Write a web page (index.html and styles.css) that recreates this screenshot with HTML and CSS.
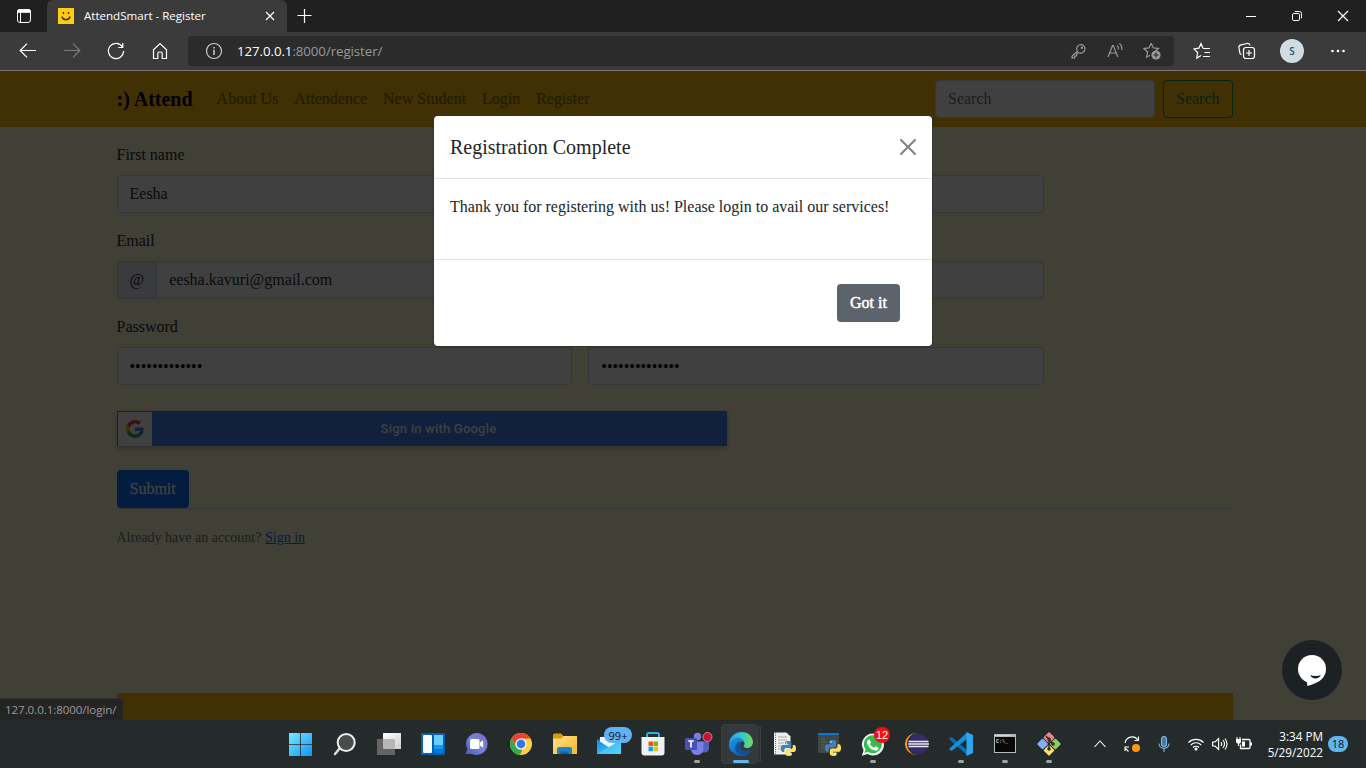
FILE: index.html
```html
<!DOCTYPE html>
<html lang="en">
<head>
<meta charset="utf-8">
<title>AttendSmart - Register</title>
<link rel="stylesheet" href="styles.css">
</head>
<body>
<div class="desktop">
  <header class="titlebar">
    <div class="tab-menu"><svg width="16" height="16" viewBox="0 0 16 16" fill="none" stroke="#fff"><rect x="1.500" y="1.500" width="13" height="13" rx="2.500"/><path d="M1.500 3.800V3.500a2 2 0 0 1 2-2h9a2 2 0 0 1 2 2v.8h-13z" fill="#fff"/><path d="M4.500 5v9.500"/></svg></div>
    <div class="tab">
      <svg class="favicon" width="16" height="16" viewBox="0 0 16 16"><path fill="#fc1" d="M0 0h16v16H0z"/><g stroke="#3a2d00" fill="none" stroke-width="1.3"><path d="M5.500 4v2M10.500 4v2M3.800 8.500c1.200 4.200 7.200 4.200 8.400 0"/></g></svg>
      <span class="tab-title">AttendSmart - Register</span>
      <svg class="tab-close" width="10" height="10" viewBox="0 0 10 10" stroke="#fff" stroke-width="1.2"><path d="m1 1 8 8M9 1 1 9"/></svg>
    </div>
    <svg class="new-tab" width="16" height="16" viewBox="0 0 16 16" stroke="#fff" stroke-width="1.2"><path d="M7.500 1v14M.5 7.500h14"/></svg>
    <div class="window-buttons">
      <span><svg width="12" height="12" viewBox="0 0 12 12" stroke="#fff"><path d="M1 6.500h10"/></svg></span>
      <span><svg width="12" height="12" viewBox="0 0 12 12" stroke="#fff" fill="none"><rect x="1.500" y="3.500" width="7" height="7" rx="1.300"/><path d="M3.800 1.500h4.700a2 2 0 0 1 2 2v4.700"/></svg></span>
      <span><svg width="12" height="12" viewBox="0 0 12 12" stroke="#fff" stroke-width="1.200"><path d="m1 1 10 10M11 1 1 11"/></svg></span>
    </div>
  </header>

  <div class="toolbar">
    <div class="nav-buttons">
      <span><svg width="18" height="16" viewBox="0 0 18 16"><path d="M17 7.500H1.500M8 .7 1.200 7.500 8 14.300"/></svg></span>
      <span class="disabled"><svg width="18" height="16" viewBox="0 0 18 16"><path d="M1 7.500h15.500M10 .7l6.800 6.800-6.800 6.800"/></svg></span>
      <span><svg width="18" height="18" viewBox="0 0 18 18"><path d="M15.500 5A7.600 7.600 0 1 0 16.600 9M15.800 1v4.500h-4.600"/></svg></span>
      <span><svg width="16" height="18" viewBox="0 0 16 18"><path d="M1.500 7.700 8 1.500l6.500 6.200v8.800h-4.300v-5q0-1.500-1.500-1.500H7.300q-1.500 0-1.500 1.500v5H1.500z"/></svg></span>
    </div>
    <div class="address">
      <svg class="info" width="18" height="18" viewBox="0 0 18 18"><circle cx="9" cy="9" r="7.500"/><path d="M9 7.800V13M9 5v1.400" stroke-width="1.500"/></svg>
      <span class="url"><b>127.0.0.1</b>:8000/register/</span>
      <div class="address-icons">
        <svg width="18" height="18" viewBox="0 0 18 18"><path d="M8.300 9.200 3 14.200v1.600h2.700V14h1.900v-1.900l1.900-1.700a4.200 4.200 0 1 0-1.200-1.200z"/><circle cx="12.900" cy="5.800" r=".6"/></svg>
        <svg width="18" height="18" viewBox="0 0 18 18"><path d="M2 15 6.500 3.500h.8L11.800 15M3.500 11h6.800M11 3.500q1.700 1 1.500 4M13.300 1.500q3 2 2.500 6.500"/></svg>
        <svg width="18" height="18" viewBox="0 0 18 18"><path d="m8.200 1.200 2.100 4.700 5.200.6-3.900 3.500M7 13.300l-3.400 1.900 1-5.200L.9 6.500l5.100-.6 2.200-4.700"/><circle cx="13" cy="13" r="4.600" fill="#999" stroke="none"/><path d="M13 10.500v5M10.500 13h5" stroke="#2b2b2b"/></svg>
      </div>
    </div>
    <div class="profile-icons">
      <span><svg width="18" height="18" viewBox="0 0 18 18"><path d="M10 6.300 8 1.500 5.900 6.200 1 6.900l3.600 3.600L3.800 16l4.300-2.500M10 6.500h7M11.500 10.500H17M10 14.500h7"/></svg></span>
      <span><svg width="18" height="18" viewBox="0 0 18 18"><path d="M3.500 12.500a2 2 0 0 1-1.500-1L.9 5.500a2.500 2.500 0 0 1 2-2.700L9 1.500a2.500 2.500 0 0 1 3 2"/><rect x="5.500" y="5.500" width="11" height="11" rx="2.500"/><path d="M11 8v6M8 11h6"/></svg></span>
      <span class="avatar-slot"><i class="avatar">S</i></span>
      <span><svg width="16" height="4" viewBox="0 0 16 4"><g fill="#fff" stroke="none"><circle cx="2.500" cy="2" r="1.300"/><circle cx="8" cy="2" r="1.300"/><circle cx="13.500" cy="2" r="1.300"/></g></svg></span>
    </div>
  </div>

  <main class="page">
    <nav class="site-nav">
      <b class="brand">:) Attend</b>
      <a>About Us</a><a>Attendence</a><a>New Student</a><a>Login</a><a>Register</a>
      <div class="search-box">Search</div>
      <div class="search-button">Search</div>
    </nav>
    <div class="content">
      <div class="fields">
        <label>First name</label>
        <div class="row"><div class="input">Eesha</div><div class="input"></div></div>
        <label>Email</label>
        <div class="group"><div class="addon">@</div><div class="input">eesha.kavuri@gmail.com</div></div>
        <label>Password</label>
        <div class="row"><div class="input secret">•••••••••••••</div><div class="input secret">••••••••••••••</div></div>
      </div>
      <div class="google">
        <div class="google-logo"><svg width="18" height="18" viewBox="0 0 48 48"><path fill="#3b110d" d="M24 9.500c3.540 0 6.710 1.220 9.210 3.600l6.850-6.850C35.900 2.380 30.470 0 24 0 14.620 0 6.510 5.380 2.560 13.220l7.980 6.190C12.430 13.720 17.740 9.500 24 9.500z"/><path fill="#11213d" d="M46.980 24.550c0-1.570-.15-3.090-.38-4.550H24v9.020h12.940c-.58 2.960-2.260 5.480-4.780 7.180l7.730 6c4.510-4.180 7.090-10.360 7.090-17.650z"/><path fill="#3f2f01" d="M10.530 28.590a14.500 14.500 0 0 1 0-9.180l-7.980-6.190a24 24 0 0 0 0 21.560z"/><path fill="#0d2a15" d="M24 48c6.480 0 11.930-2.130 15.890-5.810l-7.730-6c-2.150 1.450-4.920 2.300-8.160 2.300-6.260 0-11.570-4.220-13.470-9.910l-7.980 6.190C6.510 42.620 14.620 48 24 48z"/></svg></div>
        <span>Sign in with Google</span>
      </div>
      <div class="submit">Submit</div>
      <div class="account">Already have an account? <a>Sign in</a></div>
      <div class="footer-bar"></div>
    </div>

    <section class="modal">
      <div class="modal-header"><span>Registration Complete</span><svg width="16" height="16" viewBox="0 0 16 16" stroke="#808080" stroke-width="2" stroke-linecap="round"><path d="m1 1 14 14M15 1 1 15"/></svg></div>
      <div class="modal-body">Thank you for registering with us! Please login to avail our services!</div>
      <div class="modal-footer"><div class="got-it">Got it</div></div>
    </section>
    <div class="chat"><svg width="30" height="32" viewBox="0 0 30 32"><circle cx="15" cy="15" r="14" fill="#fff"/><path fill="#fff" d="M8 26q2.500 2 2.300 6 9-2 14.700-7.500z"/><path fill="#1d2124" d="M13.300 21.300q5 1.200 10.500 0c-1 3.800-9 4.400-10.500 0z"/></svg></div>
    <div class="status">127.0.0.1:8000/login/</div>
  </main>

  <footer class="taskbar">
    <svg width="0" height="0" class="defs"><defs>
      <linearGradient id="win" x2="1" y2="1"><stop stop-color="#75eaff"/><stop offset="1" stop-color="#1193f5"/></linearGradient>
      <linearGradient id="white" x2="1" y2="1"><stop stop-color="#fff"/><stop offset="1" stop-color="#cfcfcf"/></linearGradient>
      <linearGradient id="chatg" x1="1" x2="0" y2="1"><stop stop-color="#8d60c9"/><stop offset=".5" stop-color="#7187dc"/><stop offset="1" stop-color="#4c55bd"/></linearGradient>
      <linearGradient id="folder" x2="1" y2="1"><stop stop-color="#ffe08a"/><stop offset="1" stop-color="#f9b928"/></linearGradient>
      <linearGradient id="mail" x2="1" y2="1"><stop stop-color="#1688df"/><stop offset="1" stop-color="#51d3fa"/></linearGradient>
      <linearGradient id="edgeg" x1="0" x2="1"><stop stop-color="#2b9bea"/><stop offset=".5" stop-color="#31c4d8"/><stop offset="1" stop-color="#68df54"/></linearGradient>
      <linearGradient id="edgeb" x2="1" y2="1"><stop stop-color="#1d9eea"/><stop offset="1" stop-color="#0b4796"/></linearGradient>
      <symbol id="python" viewBox="0 0 16 16"><path fill="#3f83bd" d="M7.500 0C4.200 0 4.400 1.500 4.400 1.500v2H8v.7H2.200S0 4 0 8c0 3.800 2 3.700 2 3.700h1.500V9.500s0-2 2-2h3.700s1.900 0 1.900-1.900V1.900S11.300 0 7.500 0z"/><path fill="#ffe05c" d="M8.500 16c3.300 0 3.100-1.500 3.100-1.500v-2H8v-.7h5.800S16 12 16 8c0-3.800-2-3.700-2-3.700h-1.500v2.200s0 2-2 2H6.800s-1.900 0-1.900 1.900v3.700S4.700 16 8.500 16z"/><circle cx="6" cy="2" r=".8" fill="#fff"/><circle cx="10" cy="14" r=".8" fill="#fff"/></symbol>
    </defs></svg>
    <div class="apps">
      <div class="app"><svg viewBox="0 0 24 24"><path fill="url(#win)" d="M0 1h11.200v11H0zM12 1h11v11H12zM0 12.800h11.200V24H0zM12 12.800h11V24H12z"/></svg></div>
      <div class="app"><svg viewBox="0 0 24 24"><path d="m7 16-5 6" stroke="#ddd" stroke-width="2.500" stroke-linecap="round"/><circle cx="13.200" cy="10.500" r="8.500" fill="#4a4c4d" stroke="#eee" stroke-width="2"/></svg></div>
      <div class="app"><svg viewBox="0 0 24 24"><path fill="url(#white)" d="M6 1h18v16H6z"/><path fill="#656565" d="M0 7h18v16H0z"/><path fill="#b7b7b7" d="M6 7h12v10H6z"/></svg></div>
      <div class="app"><svg viewBox="0 0 24 24"><rect y="1" width="24" height="22" rx="1" fill="#0760ac"/><rect x="2" y="3" width="9" height="18" rx="1" fill="#f5faff"/><path fill="#68ceff" d="M13 3h9v10h-9z"/><path fill="#159aef" d="M13 13h9v8h-9z"/><path d="M13 17h9v4h-9z" fill="#007bdc"/></svg></div>
      <div class="app"><svg viewBox="0 0 24 24"><path fill="url(#chatg)" d="M12 1a11 11 0 1 1-5 21H.6l1.700-5A11 11 0 0 1 12 1z"/><rect x="5" y="7" width="9.500" height="10" rx="1.500" fill="#fff"/><path fill="#fff" d="m15 10.500 3.200-2.300v7.600L15 13.500z"/></svg></div>
      <div class="app"><svg viewBox="0 0 24 24"><circle cx="12" cy="12" r="11" fill="#fdd13c"/><path fill="#ea4335" d="M2.500 6.500A11 11 0 0 1 21.500 6.500H12A5.500 5.500 0 0 0 7.200 14.700z"/><path fill="#34a853" d="M2.500 6.500 7.200 14.700A5.500 5.500 0 0 0 13.500 17.300L11 23A11 11 0 0 1 2.500 6.500z"/><circle cx="12" cy="12" r="5.600" fill="#fff"/><circle cx="12" cy="12" r="4.400" fill="#3478e5"/></svg></div>
      <div class="app"><svg viewBox="0 0 24 24"><path fill="#d99b09" d="M0 3q0-1.500 1.500-1.500H8l3 3v5H0z"/><path fill="url(#folder)" d="M0 6.500h8l2.500-2.500H24v18H0z"/><path fill="#1b83cc" d="M4 22v-5q0-2 2-2h11q2 0 2 2v5z"/><path fill="#1263a5" d="M7.500 19.500h8V22h-8z"/></svg></div>
      <div class="app"><svg viewBox="0 0 24 24"><path fill="#0b69b9" d="M0 8 12 1l12 7v5H0z"/><path fill="#eef5fb" d="M3 5h18v6l-9 5-9-5z"/><path fill="url(#mail)" d="m0 7.500 12 8 12-8V22H0z"/><path fill="#55d1fa" fill-opacity=".6" d="m0 22 24-14.500V22z"/></svg><i class="mail-badge">99+</i></div>
      <div class="app"><svg viewBox="0 0 24 24"><path d="M6 7V3q0-2 2-2h8q2 0 2 2v4" fill="none" stroke="#22b8e6" stroke-width="2"/><path fill="#f1f1f1" d="M.5 5h23v15.500q0 3-3 3h-17q-3 0-3-3z"/><path fill="#f25022" d="M7.500 9.500H12V14H7.500z"/><path fill="#7fba00" d="M12.500 9.500H17V14h-4.500z"/><path fill="#00a4ef" d="M7.500 14.700H12v4.500H7.500z"/><path fill="#ffb900" d="M12.500 14.700H17v4.500h-4.500z"/></svg></div>
      <div class="app running"><svg viewBox="0 0 24 24"><circle cx="12.500" cy="4.500" r="3.700" fill="#777fe2"/><path fill="#555dc0" d="M16 9.500h8v7q0 4-5 4h-3z"/><path fill="#7980e4" d="M6 9.500h12.500v7q0 6.500-6.500 6.500-5 0-6-5z"/><rect y="6" width="12" height="12" rx="1" fill="#4650b7"/><path d="M3.200 9h5.600M6 9v6.500" stroke="#fff" stroke-width="1.700"/><circle cx="22.500" cy="5" r="4.500" fill="#c90f32" stroke="#e2b5bd" stroke-width=".7"/></svg></div>
      <div class="app running active"><svg viewBox="0 0 24 24"><path fill="url(#edgeb)" d="M0 13C1 3 17 3 19 12c-2-4-8-3-8 2 0 6 6 7 12 4-3 6-11 8-17 4Q0 19 0 13z"/><path fill="#124f9d" d="M8 11c-6 8 5 17 13 9l2-2c-7 2-12 1-12-4 0-3 3-5 3-5z"/><path fill="url(#edgeg)" d="M0 12C1-3 22-4 24 9.500c0 7-7 7.500-9 5.500-1-1 1-2 .5-4C13 3 3 5 0 12z"/></svg></div>
      <div class="app"><svg viewBox="0 0 24 24"><path fill="#eee" d="M1 .5h12.500l4 4v18H1z"/><path d="M2.500 1v21" stroke="#777" stroke-dasharray="1 1"/><path d="M5 5h9M5 8h9M5 11h6M5 14h5M5 17h4" stroke="#aaa"/><use href="#python" x="8" y="9" width="15" height="15"/></svg></div>
      <div class="app"><svg viewBox="0 0 24 24"><path fill="#414647" d="M1 1h21v20H1z"/><path fill="#0877cf" d="M1 1h21v2H1z"/><path d="M4 7h4M4 10h6M4 13h3M4 16h5" stroke="#43704b"/><use href="#python" x="8" y="8" width="16" height="16"/></svg></div>
      <div class="app running"><svg viewBox="0 0 24 24"><path fill="#f6f6f6" d="M12 1.500a11 11 0 1 1-5.500 20.500L.8 23.800l1.800-5.600A11 11 0 0 1 12 1.500z"/><path fill="#32be50" d="M12 3.200a9 9 0 1 1-5 16.600l-3.600 1.200 1.200-3.500A9 9 0 0 1 12 3.200z"/><path fill="#fff" d="M8.500 7.200 10 10.500l-1 1.500q1.300 2.700 4 3.800l1.500-1.600 3 1.500q0 3-3.500 2.800-7-1.500-8-8-.1-2.500 2.500-3.300z"/></svg><i class="wa-badge">12</i></div>
      <div class="app"><svg viewBox="0 0 24 24"><ellipse cx="11" cy="12" rx="11" ry="10.700" fill="#f49b27"/><circle cx="13" cy="12" r="11" fill="#252b2b"/><circle cx="13.300" cy="12" r="10.200" fill="#352b6a"/><path d="M3.500 9.500h20M3.200 12H24M3.500 14.500h20" stroke="#eee" stroke-width="1.500"/></svg></div>
      <div class="app running"><svg viewBox="0 0 24 24"><path fill="#0872b9" d="m0 7 2.500-2L18 18v5z"/><path fill="#168fdc" d="M0 17 18 .5V7L2.500 19z"/><path fill="#2ea5f4" d="m17.500 0 6.500 3v18l-6.500 3z"/></svg></div>
      <div class="app running"><svg viewBox="0 0 24 24"><path fill="#b5b8ba" d="M1 2h22v19H1z"/><path fill="#080808" d="M2 5h20v15H2z"/><path d="M2 3.500h15" stroke="#cfd9df"/><text class="prompt" x="3" y="10.500">C:\_</text></svg></div>
      <div class="app running"><svg viewBox="0 0 24 24"><g transform="rotate(45 12 12)"><rect x="3.500" y="3.500" width="8" height="8" rx="1" fill="#82aefb"/><rect x="3.500" y="3.500" width="8" height="8" rx="1" fill="#f78080"/><rect x="12.500" y="3.500" width="8" height="8" rx="1" fill="#8cce66"/><rect x="3.500" y="12.500" width="8" height="8" rx="1" fill="#82aefb"/><rect x="12.500" y="12.500" width="8" height="8" rx="1" fill="#ffe06b"/></g><path d="M9 4l7 8M12 7v10" stroke="#342d2b" stroke-width="1.500"/><g fill="#342d2b"><circle cx="12" cy="7" r="1.800"/><circle cx="16" cy="12" r="1.800"/><circle cx="12" cy="17" r="1.800"/></g></svg></div>
    </div>
    <div class="tray">
      <svg class="wide" width="16" height="16" viewBox="0 0 16 16"><path d="m2.500 11 5.500-6 5.500 6"/></svg>
      <svg class="wide" width="16" height="16" viewBox="0 0 16 16"><path d="M1 7a7.200 7.200 0 0 1 13-3M14.500.5v4h-4M1 15v-4h4M1.500 12.500l3 3"/><circle cx="12" cy="12" r="4" fill="#ff980f" stroke="none"/></svg>
      <svg class="wide mic" width="16" height="16" viewBox="0 0 16 16"><rect x="5.500" y=".5" width="5" height="10" rx="2.500" fill="#4c7799"/><path d="M3 7.500c0 6.500 10 6.500 10 0M8 12.500V16"/></svg>
      <svg width="16" height="16" viewBox="0 0 16 16"><path d="M.5 6.500a10.500 10.500 0 0 1 15 0M2.800 9a7.200 7.200 0 0 1 10.400 0M5 11.500a4.200 4.200 0 0 1 6 0"/><circle cx="8" cy="13" r="1" fill="#fff"/></svg>
      <svg width="16" height="16" viewBox="0 0 16 16"><path d="M.6 6h2.500l3.500-3.500v11L3.100 10H.6zM9 6q1.300 2 0 4M11 4q3 4 0 8M13 2.500q4 5.500 0 11"/></svg>
      <svg width="16" height="16" viewBox="0 0 16 16"><path d="M6 3.500h7q1 0 1 1v7q0 1-1 1H4.500v-4M15.300 6.500v3" stroke-width="1.300"/><path fill="#fff" stroke="none" d="M6 5.500h3v5H6zM0 3h5v3.500q-2 2.500-5 0z"/><path d="M1 1v3M4 1v3M2.500 7v3"/></svg>
      <div class="clock">3:34 PM<br>5/29/2022</div>
      <div class="count">18</div>
    </div>
  </footer>
</div>
</body>
</html>
```
FILE: styles.css
```css
* { box-sizing: border-box; }
body { margin: 0; overflow: hidden; }
svg { display: block; flex: none; }
i { font-style: normal; }
.desktop { display: flex; flex-direction: column; width: 1366px; height: 768px; font-family: "Open Sans", "Noto Sans", sans-serif; }

.titlebar { display: flex; align-items: center; height: 32px; background: #202020; }
.tab-menu { display: flex; justify-content: center; width: 47px; }
.tab { display: flex; align-items: center; width: 240px; height: 32px; padding: 0 12px 0 11px; border-radius: 6px 6px 0 0; background: #3b3b3b; color: #fff; font-size: 11.6px; }
.tab-title { flex: 1; margin-left: 10px; padding-bottom: 1px; letter-spacing: -0.02px; white-space: nowrap; }
.new-tab { margin-left: 10px; }
.window-buttons { display: flex; margin-left: auto; }
.window-buttons span { display: flex; justify-content: center; width: 46px; }

.toolbar { display: flex; align-items: center; height: 39px; padding: 0 5px 1px 6px; border-bottom: 1px solid #77777a; background: #3b3b3b; }
.toolbar svg { fill: none; stroke: #fff; stroke-width: 1.2; }
.nav-buttons, .profile-icons { display: flex; flex: none; align-items: center; }
.nav-buttons span { display: flex; justify-content: center; width: 44px; }
.nav-buttons .disabled svg { stroke: #7b7b7b; }
.address { display: flex; flex: none; align-items: center; width: 986px; height: 30px; margin-left: 6px; padding: 0 13px 0 17px; border-radius: 4px; background: #2b2b2b; color: #999; font-size: 13.3px; }
.address .info { stroke: #ccc; }
.url { margin-left: 14px; letter-spacing: -.08px; white-space: nowrap; }
.url b { color: #fff; font-weight: 400; }
.address-icons { display: flex; gap: 19px; margin-left: auto; }
.address-icons svg { stroke: #999; }
.profile-icons { margin-left: 5.5px; }
.profile-icons span { display: flex; justify-content: center; width: 45px; }
.profile-icons span:last-child { width: 46.5px; }
.avatar { display: flex; align-items: center; justify-content: center; width: 24px; height: 24px; border-radius: 50%; background: #d0dce2; color: #25505d; font-size: 10px; font-weight: 600; }

.page { position: relative; height: 649px; background: #404037; color: #090a0b; font: 16px/24px "Liberation Serif", "Times New Roman", serif; }
.site-nav { display: flex; align-items: center; height: 56px; padding: 0 133px 0 116.5px; background: #403003; }
.brand { margin-right: 24px; color: #000; font-size: 20px; }
.site-nav a { margin-right: 15.9px; color: #1f1900; }
.search-box { width: 220px; height: 38px; margin-left: auto; padding: 6px 12px; border: 1px solid #343637; border-radius: 4px; background: #404040; color: #1b1d1f; }
.search-button { width: 70px; height: 38px; margin-left: 8px; padding: 6px 12px; border: 1px solid #062215; border-radius: 4px; color: #062215; }
.content { display: flex; flex-direction: column; height: 593px; padding: 16px 133px 0 117px; }
.fields { display: flex; flex-direction: column; width: 927px; }
.fields label { margin-bottom: 8px; text-indent: -.5px; }
.row { display: grid; grid-template-columns: 455px 456px; gap: 16px; margin-bottom: 16px; }
.input { height: 38px; padding: 6px 11.5px; border: 1px solid #343536; border-radius: 4px; background: #404040; }
.secret { padding-top: 7px; color: #000; }
.secret + .secret { padding-left: 12.3px; }
.group { display: flex; margin-bottom: 16px; }
.group .input { flex: 1; padding-left: 12.2px; border-radius: 0 4px 4px 0; }
.addon { width: 39px; height: 38px; padding: 6px 11.5px; border: 1px solid #343536; border-right: 0; border-radius: 4px 0 0 4px; background: #3a3b3c; }
.google { display: flex; align-items: center; width: 610px; height: 35px; margin-top: 10px; padding-left: 1px; background: #11213d; box-shadow: 0 2px 4px rgba(0, 0, 0, .25); color: #404040; font: 500 13px Roboto, sans-serif; letter-spacing: .21px; }
.google-logo { display: flex; align-items: center; justify-content: center; width: 34px; height: 34px; background: #404040; }
.google span { flex: 1; padding-right: 2px; text-align: center; }
.submit { width: 72px; height: 38px; margin-top: 24px; padding: 7px 12.5px; border-radius: 4px; background: #031c40; color: #404040; -webkit-text-stroke: .4px; }
.account { border-top: 1px solid #37383a; padding-top: 17px; color: #1b1d1f; font-size: 14px; text-indent: -.5px; }
.account a { color: #031b45; text-decoration: underline; }
.footer-bar { height: 27px; margin-top: auto; background: #403003; }

.modal { position: absolute; top: 45px; left: 434px; width: 498px; height: 230px; border-radius: 4px; background: #fff; color: #212529; box-shadow: 0 0 0 1px #33332c; }
.modal-header { display: flex; align-items: center; justify-content: space-between; height: 63px; padding: 0 16px; border-bottom: 1px solid #dee2e6; font-size: 20px; }
.modal-body { height: 81px; padding: 16px; border-bottom: 1px solid #dee2e6; white-space: nowrap; }
.modal-footer { display: flex; justify-content: flex-end; padding: 24px 32px; }
.got-it { width: 63px; height: 38px; padding: 7px 13px; border-radius: 4px; background: #5c636a; color: #fff; -webkit-text-stroke: .5px; }
.chat { position: absolute; top: 569px; left: 1282px; display: flex; align-items: center; justify-content: center; width: 60px; height: 60px; border-radius: 50%; background: #1d2124; }
.status { position: absolute; bottom: 0; left: 0; width: 124px; height: 22px; padding-left: 5px; border: 1px solid #303030; border-width: 1px 1px 0 0; border-radius: 0 4px 0 0; background: #242424; color: #999; font: 11.6px/21px "Open Sans", sans-serif; letter-spacing: -.08px; white-space: nowrap; }

.taskbar { display: flex; height: 48px; padding-left: 279px; background: #252b2b; color: #fff; }
.defs { position: absolute; }
.apps { display: flex; }
.app { position: relative; display: flex; align-items: center; justify-content: center; width: 44px; height: 48px; }
.app > svg { position: relative; width: 24px; height: 24px; overflow: visible; }
.active::before { content: ""; position: absolute; inset: 4px 5px 4px 2px; border: 1px solid #3a4040; border-radius: 4px; background: #343a3a; box-shadow: 3px 0 0 -1px #2d3333, 4px 0 0 -1px #3a4040; }
.running::after { content: ""; position: absolute; bottom: 5px; left: 19px; width: 6px; height: 3px; border-radius: 2px; background: #a0a3a3; }
.active::after { left: 14px; width: 16px; background: #60b4f2; }
.mail-badge, .wa-badge { position: absolute; display: flex; align-items: center; justify-content: center; height: 16px; border-radius: 8px; }
.mail-badge { top: 7px; left: 17px; width: 28px; background: #5fb2f2; color: #111; font-size: 11px; }
.wa-badge { top: 7px; left: 23px; width: 16px; background: #fa0d0d; color: #fff; font: 11px "Liberation Sans", sans-serif; }
.prompt { fill: #ddd; font: bold 5px "Liberation Mono", monospace; }
.tray { display: flex; align-items: center; margin-left: auto; padding-right: 18px; }
.tray svg { margin: 0 4px; fill: none; stroke: #fff; stroke-width: 1.1; }
.tray .wide { margin: 0 8px; }
.tray .mic { margin-right: 12px; stroke: #79b9ed; }
.clock { width: 67px; font-size: 11.7px; line-height: 16px; text-align: right; }
.count { width: 20px; height: 16px; margin-left: 5px; border-radius: 8px; background: #60b4f2; color: #111; font-size: 11px; line-height: 16px; text-align: center; }
```
